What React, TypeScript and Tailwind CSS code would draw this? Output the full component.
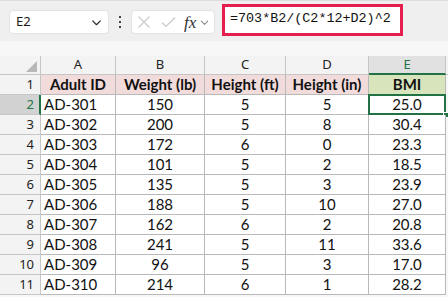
import React from 'react';

const rows: [string, number, number, number, string][] = [
    ['AD-301', 150, 5, 5, '25.0'],
    ['AD-302', 200, 5, 8, '30.4'],
    ['AD-303', 172, 6, 0, '23.3'],
    ['AD-304', 101, 5, 2, '18.5'],
    ['AD-305', 135, 5, 3, '23.9'],
    ['AD-306', 188, 5, 10, '27.0'],
    ['AD-307', 162, 6, 2, '20.8'],
    ['AD-308', 241, 5, 11, '33.6'],
    ['AD-309', 96, 5, 3, '17.0'],
    ['AD-310', 214, 6, 1, '28.2'],
];

const ui = { fontFamily: '"Noto Sans", "Open Sans", sans-serif' };
const cellFont = { fontFamily: 'Lato, "Liberation Sans", sans-serif' };

const Chevron = ({ size = 12, color = '#444' }: { size?: number; color?: string }) => (
    <svg width={size} height={size} viewBox="0 0 12 12" fill="none">
        <path d="M2.5 4.5 L6 8 L9.5 4.5" stroke={color} strokeWidth="1.2" strokeLinecap="round" strokeLinejoin="round" />
    </svg>
);

const Toolbar = () => (
    <div className="h-[41px] bg-[#efefef] border-t border-[#dcdcdc] flex items-center" style={ui}>
        {/* Name box */}
        <div className="ml-[9px] mt-[2px] w-[100px] h-[24px] bg-white rounded-[4px] border border-[#e2e2e2] flex items-center justify-between pl-[6px] pr-[5px]">
            <span className="text-[13px] text-[#1a1a1a]">E2</span>
            <Chevron size={13} color="#333" />
        </div>
        {/* dots */}
        <div className="w-[22px] mt-[2px] flex flex-col items-center gap-[3px]">
            <div className="w-[2px] h-[2px] bg-[#444]" />
            <div className="w-[2px] h-[2px] bg-[#444]" />
            <div className="w-[2px] h-[2px] bg-[#444]" />
        </div>
        {/* cancel / enter / fx */}
        <div className="mt-[2px] w-[84px] h-[24px] bg-white rounded-[4px] border border-[#e2e2e2] flex items-center pl-[5px]">
            <svg width="14" height="14" viewBox="0 0 14 14" fill="none">
                <path d="M1.5 1.5 L12.5 12.5 M12.5 1.5 L1.5 12.5" stroke="#c8c8c8" strokeWidth="1.1" />
            </svg>
            <svg className="ml-[10px]" width="15" height="14" viewBox="0 0 15 14" fill="none">
                <path d="M1 7.5 L5 11.5 L14 2.5" stroke="#c8c8c8" strokeWidth="1.1" />
            </svg>
            <span className="ml-[8px] text-[17px] italic leading-none text-[#333]" style={{ fontFamily: '"Liberation Serif", serif' }}>
                fx
            </span>
            <span className="ml-[3px]"><Chevron size={11} color="#8a8a8a" /></span>
        </div>
        {/* formula */}
        <div className="ml-[7px] w-[181px] h-[32px] -mt-[3px] bg-white border-[3px] border-[#e61e4d] flex items-center pl-[5px]">
            <span className="text-[13.4px] text-[#111]" style={{ fontFamily: '"Liberation Mono", monospace' }}>
                =703*B2/(C2*12+D2)^2
            </span>
        </div>
    </div>
);

const cols = ['A', 'B', 'C', 'D', 'E'];

export default function App() {
    return (
        <div className="w-[448px] h-[297px] overflow-hidden bg-[#f7f7f7]">
            <Toolbar />
            <div className="h-[15px] bg-[#f7f7f7]" />
            <div className="grid grid-cols-[41px_75px_89px_81px_83px_77px_2px] grid-rows-[19px_repeat(11,20px)]">
                {/* corner */}
                <div className="bg-[#f3f3f3] border-r border-b border-[#c6c6c6] flex items-end justify-end pr-[3px] pb-[2px]">
                    <div className="w-[11px] h-[11px] bg-[#b8b8b8] [clip-path:polygon(100%_0,100%_100%,0_100%)]" />
                </div>
                {cols.map((c) => (
                    <div
                        key={c}
                        className={
                            c === 'E'
                                ? 'bg-[#e1e1e1] border-r border-[#c6c6c6] border-b-2 border-b-[#217346] flex items-center justify-center text-[13px] text-[#217346]'
                                : 'bg-[#f3f3f3] border-r border-b border-[#c6c6c6] flex items-center justify-center text-[13px] text-[#222]'
                        }
                        style={ui}
                    >
                        {c}
                    </div>
                ))}
                <div className="bg-[#f3f3f3] border-b border-[#c6c6c6]" />

                {/* row 1 headers */}
                <div className="bg-[#f3f3f3] border-r border-b border-[#c6c6c6] flex items-center justify-end pr-[6px] text-[13px] text-[#222]" style={ui}>
                    1
                </div>
                {['Adult ID', 'Weight (lb)', 'Height (ft)', 'Height (in)'].map((h) => (
                    <div key={h} className="bg-[#f2dcdb] border-r border-b border-[#b9b9b9] flex items-center justify-center text-[15px] font-bold text-[#111]" style={cellFont}>
                        {h}
                    </div>
                ))}
                <div className="bg-[#d8e4bc] border-r border-b border-[#b9b9b9] flex items-center justify-center text-[15px] font-bold text-[#111]" style={cellFont}>
                    BMI
                </div>
                <div className="bg-[#f7f7f7]" />

                {rows.map((r, i) => {
                    const n = i + 2;
                    const sel = n === 2;
                    return (
                        <React.Fragment key={n}>
                            <div
                                className={
                                    sel
                                        ? 'bg-[#d2d2d2] border-r-2 border-r-[#217346] border-b border-[#c6c6c6] flex items-center justify-end pr-[5px] text-[13px] text-[#217346]'
                                        : 'bg-[#f3f3f3] border-r border-b border-[#c6c6c6] flex items-center justify-end pr-[6px] text-[13px] text-[#222]'
                                }
                                style={ui}
                            >
                                {n}
                            </div>
                            <div className="bg-white border-r border-b border-[#b9b9b9] flex items-center pl-[3px] text-[15px] text-[#111]" style={cellFont}>
                                {r[0]}
                            </div>
                            {[r[1], r[2], r[3]].map((v, j) => (
                                <div key={j} className="bg-white border-r border-b border-[#b9b9b9] flex items-center justify-center text-[15px] text-[#111]" style={cellFont}>
                                    {v}
                                </div>
                            ))}
                            <div className="relative bg-white border-r border-b border-[#b9b9b9] flex items-center justify-center text-[15px] text-[#111]" style={cellFont}>
                                {r[4]}
                                {sel && (
                                    <>
                                        <div className="absolute -left-[1px] -top-[1px] -right-[1px] -bottom-[1px] border-2 border-[#217346]" />
                                        <div className="absolute -right-[4px] -bottom-[4px] w-[6px] h-[6px] bg-[#217346] border border-white" />
                                    </>
                                )}
                            </div>
                            <div className="bg-[#f7f7f7]" />
                        </React.Fragment>
                    );
                })}
            </div>
        </div>
    );
}
